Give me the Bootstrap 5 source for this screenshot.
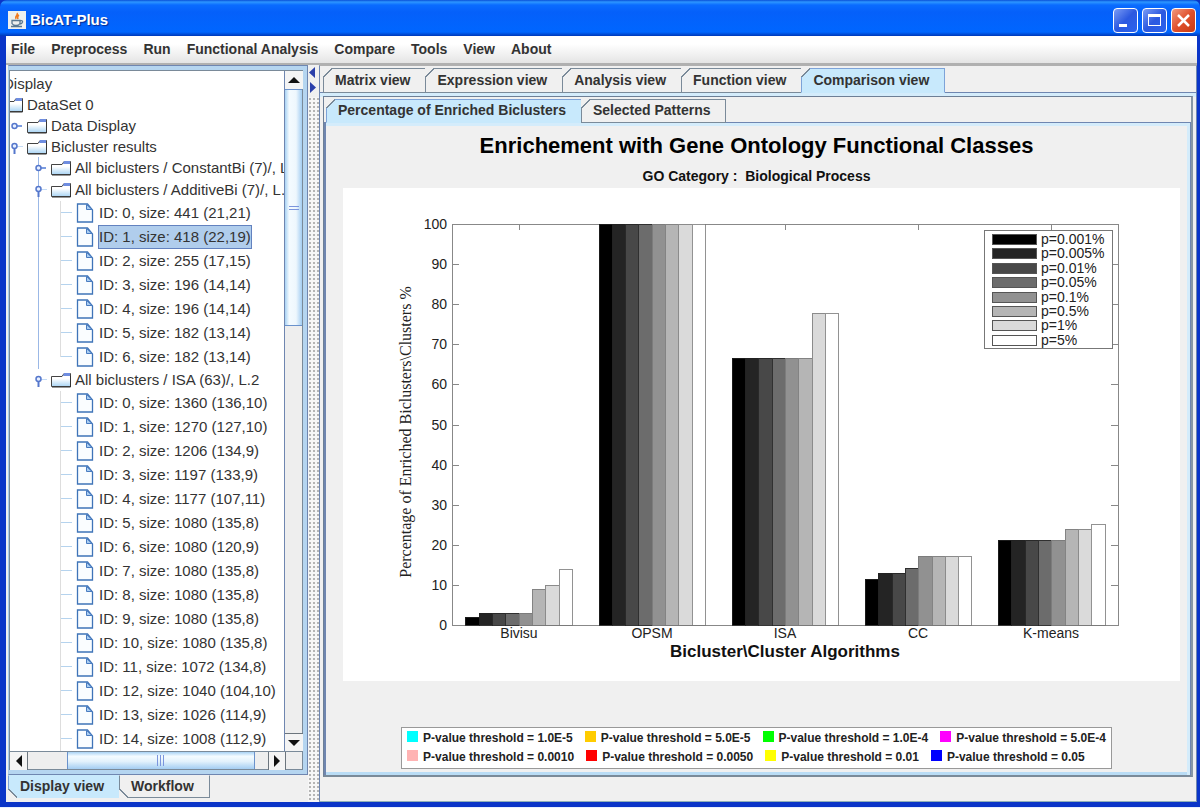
<!DOCTYPE html>
<html lang="en">
<head>
<meta charset="utf-8">
<meta name="viewport" content="width=device-width, initial-scale=1">
<title>BicAT-Plus</title>
<link rel="stylesheet" href="https://cdn.jsdelivr.net/npm/bootstrap@5.3.0/dist/css/bootstrap.min.css">
<style>
:root{--line:#6f86b0;--panel:#f0f0f0;--sky:#c8e9fc;--steel:#7a8a99}
body{font-family:"Liberation Sans",Arial,sans-serif;font-size:14px;line-height:20px;color:#333;background:#fff}
button{font:inherit;color:inherit}
.app-window{min-height:100vh;border-bottom:2px solid #e8f0ff;background:#0a35c8}
.title-bar{height:36px;padding:4px 4px 0 8px;color:#fff;font-size:15px;font-weight:700;border-radius:7px 7px 0 0;
  background:linear-gradient(#0a50d8 0,#2d96ff 2px,#0a6cff 5px,#0560fa 12px,#0066ff 32px,#0038b8 36px);text-shadow:1px 1px 1px #052a90}
.app-icon{width:18px;height:18px}
.win-btn{width:25px;height:25px;padding:0;border:1px solid #fff;border-radius:4px;background:linear-gradient(135deg,#7b9cf5,#2c59e0 50%,#2a63ee)}
.win-btn.is-close{background:linear-gradient(135deg,#f09a80,#e0502c 50%,#c83a14)}
.win-btn svg{display:block;margin:auto}
.app-body{margin:0 3px 5px 6px;background:var(--panel)}
.menu-strip{height:29px;padding:3px 5px 0;gap:16px;border-bottom:2px solid #b0b0b0;background:linear-gradient(#fff 30%,#e4e4e4)}
.menu-strip button{border:0;background:none;padding:0;font-weight:700}
.left-pane{width:302px;padding-left:2px}
.tree-frame{border:1px solid var(--line);border-left-color:#a8cbe8;background:#b5d5f0;padding:4px 4px 4px 0}
.tree-scroll{border:1px solid var(--steel);background:#fff}
.tree-view{overflow:hidden;background:#fff;width:0;font-size:15px}
.tree-view ul{list-style:none;margin:0;padding:0 0 0 24px}
.tree-view>ul{margin-left:-51px;padding:2px 0 0}
.node{display:flex;align-items:center;height:21px;white-space:nowrap}
.node svg{flex:none}
.deep>li>.node{height:22px}
.leaves .node{height:24px}
.node span{margin-left:3px;padding:0 1px}
.node .picked{background:#b0cdec;border:1px solid #6382bf;padding:1px 0}
.trunk{background:linear-gradient(#9bb8e6,#9bb8e6) 7px 0/1px 100% no-repeat}
.vbar{width:18px;background:#eee;border-left:1px solid var(--line)}
.hbar{height:18px;background:#eee;border-top:1px solid var(--steel)}
.arrow{display:grid;place-items:center;width:18px;height:18px;padding:0;border:0;background:#f4f4f4}
.vthumb{height:237px;border:solid #6a92cc;border-width:1px 0;background:linear-gradient(90deg,#a8d2f4,#f4fbff 25%,#eef7fd 65%,#a3cdf2)}
.hthumb{width:188px;margin-left:39px;border:solid #6a92cc;border-width:0 1px;background:linear-gradient(#a8d2f4,#f4fbff 25%,#e3f2fc 55%,#a3cdf2)}
.grip{width:10px;height:4px;border:solid #7b95dd;border-width:1px 0}
.grip-h{width:8px;height:11px;background:repeating-linear-gradient(90deg,#7b95dd 0 1px,transparent 1px 3px)}
.splitter{width:11px;background-color:#f6f6f6;background-image:radial-gradient(#b4b4b4 1px,transparent 1px);background-size:4px 4px}
.splitter svg{display:block;background:#f0f0f0}
.edge-tab{position:relative;border:1px solid var(--steel);border-right:0;background:var(--panel);font-weight:700;padding:0 15px 2px 11px;white-space:nowrap}
.edge-tab:last-child{border-right:1px solid var(--steel)}
.edge-tab.is-on{background:var(--sky);border-color:#7da3d8;border-bottom-color:var(--sky)}
.edge-tab::before{content:"";position:absolute;left:-1px;top:-1px;width:9px;height:9px;
  background:linear-gradient(135deg,var(--panel) 46%,var(--steel) 46% 56%,transparent 56%)}
.top-tabs{padding:2px 0 0 3px}
.top-tabs .edge-tab{height:25px;margin-bottom:-1px}
.inner-box .top-tabs{padding:2px 0 0 2px}
.inner-box .edge-tab{height:24px}
.foot-tabs .edge-tab{height:23px;border-top-color:transparent;padding-top:0}
.foot-tabs .edge-tab::before{top:auto;bottom:-1px;background:linear-gradient(45deg,var(--panel) 46%,var(--steel) 46% 56%,transparent 56%)}
.right-pane{border:1px solid var(--line);border-top-color:#b0b0b0;border-bottom-color:#8fb0b8}
.outer-page{border-top:1px solid var(--line);padding:3px 3px 24px;background:linear-gradient(#d4ecfb 4px,var(--panel) 4px)}
.inner-box{border:1px solid #6d7f96;border-right:2px solid #8797a6;border-bottom:2px solid #7a8a99}
.inner-page{border:1px solid var(--line);border-width:1px 1px 0 2px;box-shadow:inset 0 3px 0 #d4ecfb,inset -3px 0 0 #d4ecfb,inset 0 -3px 0 #b9dcf5;padding:10px 10px 4px 17px}
.plot-head{padding-right:10px}
.plot-title{font-size:22px;line-height:26px;font-weight:700;color:#000;margin:0}
.plot-sub{font-weight:700;color:#111;margin:7px 0 2px}
.chart{display:block;width:100%;height:auto;background:#fff}
.p-legend{border:1px solid #999;background:#fff;padding:1px 5px;margin:auto 10px 2px 0;color:#222;font-size:12px;font-weight:700;line-height:19px}
.p-row{display:flex;gap:12px}
.swatch{display:inline-block;width:11px;height:11px;margin-right:5px}
</style>
</head>
<body>
<svg width="0" height="0" class="position-absolute" aria-hidden="true">
  <defs>
    <linearGradient id="fill" x1="0" y1="0" x2="0" y2="1"><stop offset="0" stop-color="#fff"/><stop offset=".4" stop-color="#fff"/><stop offset="1" stop-color="#a9d4f4"/></linearGradient>
    <symbol id="folder" viewBox="0 0 20 16"><path d="M.5 4.500H11l2-3h6.500v13H.5z" fill="url(#fill)" stroke="#444"/><path d="M13 1h6v3h-7z" fill="#6f8de0"/><path d="M19.500 4v11H1" fill="none" stroke="#333"/></symbol>
    <symbol id="doc" viewBox="0 0 20 20"><path d="M2.500 1h10l5 6v12h-15z" fill="#fafdff" stroke="#3f74b8" stroke-width="1.300"/><path d="M11.500 1.500v5h5.500z" fill="#a9cdf2" stroke="#4a7cc0"/></symbol>
    <symbol id="shut" viewBox="0 0 20 20"><path d="M9 10h6" stroke="#7c9ce0" stroke-width="2"/><circle cx="7.500" cy="10" r="2.500" fill="#e8f0ff" stroke="#5577cc" stroke-width="1.500"/></symbol>
    <symbol id="open" viewBox="0 0 20 20"><path d="M10 9.500h6" stroke="#c5dbf5"/><path d="M7.500 12v5" stroke="#5577cc" stroke-width="2"/><circle cx="7.500" cy="9" r="2.500" fill="#e8f0ff" stroke="#5577cc" stroke-width="1.500"/></symbol>
    <symbol id="twig" viewBox="0 0 20 24"><path d="M5.500 0v24" stroke="#ddd"/><path d="M6 11.500h11" stroke="#b5d3ee"/></symbol>
    <symbol id="twigend" viewBox="0 0 20 24"><path d="M5.500 0v12" stroke="#ddd"/><path d="M6 11.500h11" stroke="#b5d3ee"/></symbol>
  </defs>
</svg>
<div class="app-window d-flex flex-column">
  <header class="title-bar d-flex align-items-center">
    <svg class="app-icon" viewBox="0 0 18 18"><rect width="18" height="18" fill="#eef0ee"/><path d="M9 2c2 2-3 3-1 6M11 4c-2 1-2 2-1 4" stroke="#f07a20" stroke-width="1.600" fill="none"/><path d="M4 9.500h8v3q-1 2-4 2t-4-2zM12 10q3-1 2.500 1T12 13M3 15.500h11" stroke="#5a7890" stroke-width="1.300" fill="none"/></svg>
    <span class="ms-1">BicAT-Plus</span>
    <div class="ms-auto d-flex gap-1">
      <button class="win-btn" type="button" aria-label="Minimize"><svg width="23" height="23"><path d="M5 16.500h8" stroke="#fff" stroke-width="3"/></svg></button>
      <button class="win-btn" type="button" aria-label="Maximize"><svg width="23" height="23"><path d="M5 6.500h13" stroke="#fff" stroke-width="3"/><rect x="5.500" y="6.500" width="12" height="10" fill="none" stroke="#fff"/></svg></button>
      <button class="win-btn is-close" type="button" aria-label="Close"><svg width="23" height="23"><path d="M6 6l11 11M17 6L6 17" stroke="#fff" stroke-width="2.500"/></svg></button>
    </div>
  </header>
  <div class="app-body flex-grow-1 d-flex flex-column">
    <nav class="menu-strip d-flex align-items-start">
      <button type="button">File</button><button type="button">Preprocess</button><button type="button">Run</button><button type="button">Functional Analysis</button><button type="button">Compare</button><button type="button">Tools</button><button type="button">View</button><button type="button">About</button>
    </nav>
    <div class="flex-grow-1 d-flex">
      <aside class="left-pane flex-shrink-0 d-flex flex-column">
        <div class="tree-frame flex-grow-1 d-flex">
          <div class="tree-scroll flex-grow-1 d-flex flex-column">
            <div class="flex-grow-1 d-flex">
              <div class="tree-view flex-grow-1">
                <ul>
                  <li><div class="node"><svg width="20" height="20"></svg><svg width="20" height="16"><use href="#folder"/></svg><span>Display</span></div>
                    <ul><li><div class="node"><svg width="20" height="20"></svg><svg width="20" height="16"><use href="#folder"/></svg><span>DataSet 0</span></div>
                      <ul>
                        <li><div class="node"><svg width="20" height="20"><use href="#shut"/></svg><svg width="20" height="16"><use href="#folder"/></svg><span>Data Display</span></div></li>
                        <li><div class="node"><svg width="20" height="20"><use href="#open"/></svg><svg width="20" height="16"><use href="#folder"/></svg><span>Bicluster results</span></div>
                          <ul class="deep">
                            <li class="trunk"><div class="node"><svg width="20" height="20"><use href="#shut"/></svg><svg width="20" height="16"><use href="#folder"/></svg><span>All biclusters / ConstantBi (7)/, L.1</span></div></li>
                            <li class="trunk"><div class="node"><svg width="20" height="20"><use href="#open"/></svg><svg width="20" height="16"><use href="#folder"/></svg><span>All biclusters / AdditiveBi (7)/, L.1</span></div>
                              <ul class="leaves">
                                <li class="node"><svg width="20" height="24"><use href="#twig"/></svg><svg width="20" height="20"><use href="#doc"/></svg><span>ID: 0, size: 441 (21,21)</span></li>
                                <li class="node"><svg width="20" height="24"><use href="#twig"/></svg><svg width="20" height="20"><use href="#doc"/></svg><span class="picked">ID: 1, size: 418 (22,19)</span></li>
                                <li class="node"><svg width="20" height="24"><use href="#twig"/></svg><svg width="20" height="20"><use href="#doc"/></svg><span>ID: 2, size: 255 (17,15)</span></li>
                                <li class="node"><svg width="20" height="24"><use href="#twig"/></svg><svg width="20" height="20"><use href="#doc"/></svg><span>ID: 3, size: 196 (14,14)</span></li>
                                <li class="node"><svg width="20" height="24"><use href="#twig"/></svg><svg width="20" height="20"><use href="#doc"/></svg><span>ID: 4, size: 196 (14,14)</span></li>
                                <li class="node"><svg width="20" height="24"><use href="#twig"/></svg><svg width="20" height="20"><use href="#doc"/></svg><span>ID: 5, size: 182 (13,14)</span></li>
                                <li class="node"><svg width="20" height="24"><use href="#twigend"/></svg><svg width="20" height="20"><use href="#doc"/></svg><span>ID: 6, size: 182 (13,14)</span></li>
                              </ul></li>
                            <li><div class="node"><svg width="20" height="20"><use href="#open"/></svg><svg width="20" height="16"><use href="#folder"/></svg><span>All biclusters / ISA (63)/, L.2</span></div>
                              <ul class="leaves">
                                <li class="node"><svg width="20" height="24"><use href="#twig"/></svg><svg width="20" height="20"><use href="#doc"/></svg><span>ID: 0, size: 1360 (136,10)</span></li>
                                <li class="node"><svg width="20" height="24"><use href="#twig"/></svg><svg width="20" height="20"><use href="#doc"/></svg><span>ID: 1, size: 1270 (127,10)</span></li>
                                <li class="node"><svg width="20" height="24"><use href="#twig"/></svg><svg width="20" height="20"><use href="#doc"/></svg><span>ID: 2, size: 1206 (134,9)</span></li>
                                <li class="node"><svg width="20" height="24"><use href="#twig"/></svg><svg width="20" height="20"><use href="#doc"/></svg><span>ID: 3, size: 1197 (133,9)</span></li>
                                <li class="node"><svg width="20" height="24"><use href="#twig"/></svg><svg width="20" height="20"><use href="#doc"/></svg><span>ID: 4, size: 1177 (107,11)</span></li>
                                <li class="node"><svg width="20" height="24"><use href="#twig"/></svg><svg width="20" height="20"><use href="#doc"/></svg><span>ID: 5, size: 1080 (135,8)</span></li>
                                <li class="node"><svg width="20" height="24"><use href="#twig"/></svg><svg width="20" height="20"><use href="#doc"/></svg><span>ID: 6, size: 1080 (120,9)</span></li>
                                <li class="node"><svg width="20" height="24"><use href="#twig"/></svg><svg width="20" height="20"><use href="#doc"/></svg><span>ID: 7, size: 1080 (135,8)</span></li>
                                <li class="node"><svg width="20" height="24"><use href="#twig"/></svg><svg width="20" height="20"><use href="#doc"/></svg><span>ID: 8, size: 1080 (135,8)</span></li>
                                <li class="node"><svg width="20" height="24"><use href="#twig"/></svg><svg width="20" height="20"><use href="#doc"/></svg><span>ID: 9, size: 1080 (135,8)</span></li>
                                <li class="node"><svg width="20" height="24"><use href="#twig"/></svg><svg width="20" height="20"><use href="#doc"/></svg><span>ID: 10, size: 1080 (135,8)</span></li>
                                <li class="node"><svg width="20" height="24"><use href="#twig"/></svg><svg width="20" height="20"><use href="#doc"/></svg><span>ID: 11, size: 1072 (134,8)</span></li>
                                <li class="node"><svg width="20" height="24"><use href="#twig"/></svg><svg width="20" height="20"><use href="#doc"/></svg><span>ID: 12, size: 1040 (104,10)</span></li>
                                <li class="node"><svg width="20" height="24"><use href="#twig"/></svg><svg width="20" height="20"><use href="#doc"/></svg><span>ID: 13, size: 1026 (114,9)</span></li>
                                <li class="node"><svg width="20" height="24"><use href="#twig"/></svg><svg width="20" height="20"><use href="#doc"/></svg><span>ID: 14, size: 1008 (112,9)</span></li>
                              </ul></li>
                          </ul></li>
                      </ul></li></ul></li>
                </ul>
              </div>
              <div class="vbar d-flex flex-column">
                <button class="arrow" type="button" aria-label="Scroll up"><svg width="12" height="6"><path d="M0 6L6 0l6 6z" fill="#111"/></svg></button>
                <div class="vthumb d-flex align-items-center justify-content-center"><div class="grip"></div></div>
                <button class="arrow mt-auto border-top border-secondary" type="button" aria-label="Scroll down"><svg width="12" height="6"><path d="M0 0l6 6 6-6z" fill="#111"/></svg></button>
              </div>
            </div>
            <div class="hbar d-flex">
              <button class="arrow border-end border-secondary" type="button" aria-label="Scroll left"><svg width="6" height="12"><path d="M6 0L0 6l6 6z" fill="#111"/></svg></button>
              <div class="hthumb d-flex align-items-center justify-content-center"><div class="grip-h"></div></div>
              <button class="arrow ms-auto me-3 border-start border-end border-secondary" type="button" aria-label="Scroll right"><svg width="6" height="12"><path d="M0 0l6 6-6 6z" fill="#111"/></svg></button>
            </div>
          </div>
        </div>
        <div class="foot-tabs d-flex mb-1" role="tablist">
          <button class="edge-tab is-on" role="tab" type="button">Display view</button><button class="edge-tab" role="tab" type="button">Workflow</button>
        </div>
      </aside>
      <div class="splitter flex-shrink-0"><svg width="11" height="32"><path d="M7 2v11L1 7.500zM2 17v11l6-5.500z" fill="#2a3faa"/></svg></div>
      <main class="right-pane flex-grow-1 d-flex flex-column">
        <div class="top-tabs d-flex" role="tablist">
          <button class="edge-tab" role="tab" type="button">Matrix view</button><button class="edge-tab" role="tab" type="button">Expression view</button><button class="edge-tab" role="tab" type="button">Analysis view</button><button class="edge-tab" role="tab" type="button">Function view</button><button class="edge-tab is-on" role="tab" type="button">Comparison view</button>
        </div>
        <div class="outer-page flex-grow-1 d-flex flex-column">
          <div class="inner-box flex-grow-1 d-flex flex-column">
            <div class="top-tabs d-flex" role="tablist">
              <button class="edge-tab is-on" role="tab" type="button">Percentage of Enriched Biclusters</button><button class="edge-tab" role="tab" type="button">Selected Patterns</button>
            </div>
            <section class="inner-page flex-grow-1 d-flex flex-column">
              <div class="plot-head text-center">
                <h1 class="plot-title">Enrichement with Gene Ontology Functional Classes</h1>
                <p class="plot-sub">GO Category :&nbsp; Biological Process</p>
              </div>
              <svg class="chart" id="chart" viewBox="0 0 837 493" font-family="Liberation Sans, Arial, sans-serif" font-size="14" fill="#222" role="img" aria-label="Enriched biclusters by algorithm"></svg>
              <div class="p-legend align-self-center">
                <div class="p-row"><span><i class="swatch" style="background:#0ff"></i>P-value threshold = 1.0E-5</span><span><i class="swatch" style="background:#fc0"></i>P-value threshold = 5.0E-5</span><span><i class="swatch" style="background:#0f0"></i>P-value threshold = 1.0E-4</span><span><i class="swatch" style="background:#f0f"></i>P-value threshold = 5.0E-4</span></div>
                <div class="p-row"><span><i class="swatch" style="background:#ffb3b3"></i>P-value threshold = 0.0010</span><span><i class="swatch" style="background:#f00"></i>P-value threshold = 0.0050</span><span><i class="swatch" style="background:#ff0"></i>P-value threshold = 0.01</span><span><i class="swatch" style="background:#00f"></i>P-value threshold = 0.05</span></div>
              </div>
            </section>
          </div>
        </div>
      </main>
    </div>
  </div>
</div>
<script>
const data = {
  'Bivisu': [2, 3, 3, 3, 3, 9, 10, 14],
  'OPSM': [100, 100, 100, 100, 100, 100, 100, 100],
  'ISA': [66.5, 66.5, 66.5, 66.5, 66.5, 66.5, 77.8, 77.8],
  'CC': [11.5, 13, 13, 14.3, 17.3, 17.3, 17.3, 17.3],
  'K-means': [21.3, 21.3, 21.3, 21.3, 21.3, 24, 24, 25.3]
};
const shades = ['#000', '#242424', '#484848', '#6c6c6c', '#919191', '#b5b5b5', '#dadada', '#fff'];
const levels = ['0.001', '0.005', '0.01', '0.05', '0.1', '0.5', '1', '5'];
const x0 = 109, x1 = 775, top0 = 36, base = 437, group = (x1 - x0) / 5, bar = group / 10;
const y = v => Math.round(base - v * (base - top0) / 100);
let s = `<rect x="${x0}" y="${top0}" width="${x1 - x0}" height="${base - top0}" fill="#fff" stroke="#888" shape-rendering="crispEdges"/>`;
for (let v = 0; v <= 100; v += 10) {
  s += `<path d="M${x0} ${y(v)}h7M${x1} ${y(v)}h-7" stroke="#888" shape-rendering="crispEdges"/>`;
  s += `<text x="104" y="${y(v) + 5}" text-anchor="end">${v}</text>`;
}
Object.entries(data).forEach(([name, values], g) => {
  const mid = Math.round(x0 + group * (g + 0.5));
  s += `<path d="M${mid} ${top0}v6" stroke="#888" shape-rendering="crispEdges"/>`;
  values.forEach((v, i) => {
    const a = Math.round(x0 + group * g + bar * (i + 1)), b = Math.round(x0 + group * g + bar * (i + 2));
    s += `<rect x="${a}" y="${y(v)}" width="${b - a}" height="${base - y(v)}" fill="${shades[i]}" stroke="${i < 4 ? '#222' : '#777'}" stroke-opacity=".8" shape-rendering="crispEdges"/>`;
  });
  s += `<text x="${mid}" y="450" text-anchor="middle">${name}</text>`;
});
s += `<text x="442" y="469" text-anchor="middle" font-size="17" font-weight="700" fill="#111">Bicluster\\Cluster Algorithms</text>`;
s += `<text transform="translate(68 244) rotate(-90)" text-anchor="middle" font-family="Liberation Serif, serif" font-size="16">Percentage of Enriched Biclusters\\Clusters %</text>`;
s += `<rect x="641" y="42" width="128" height="118" fill="#fff" stroke="#777" shape-rendering="crispEdges"/>`;
levels.forEach((p, i) => {
  const t = Math.round(46 + i * 14.4);
  s += `<rect x="649" y="${t}" width="44" height="10" fill="${shades[i]}" stroke="#555" shape-rendering="crispEdges"/>`;
  s += `<text x="698" y="${t + 10}">p=${p}%</text>`;
});
document.getElementById('chart').innerHTML = s;
</script>
<script src="https://cdn.jsdelivr.net/npm/bootstrap@5.3.0/dist/js/bootstrap.bundle.min.js"></script>
</body>
</html>
